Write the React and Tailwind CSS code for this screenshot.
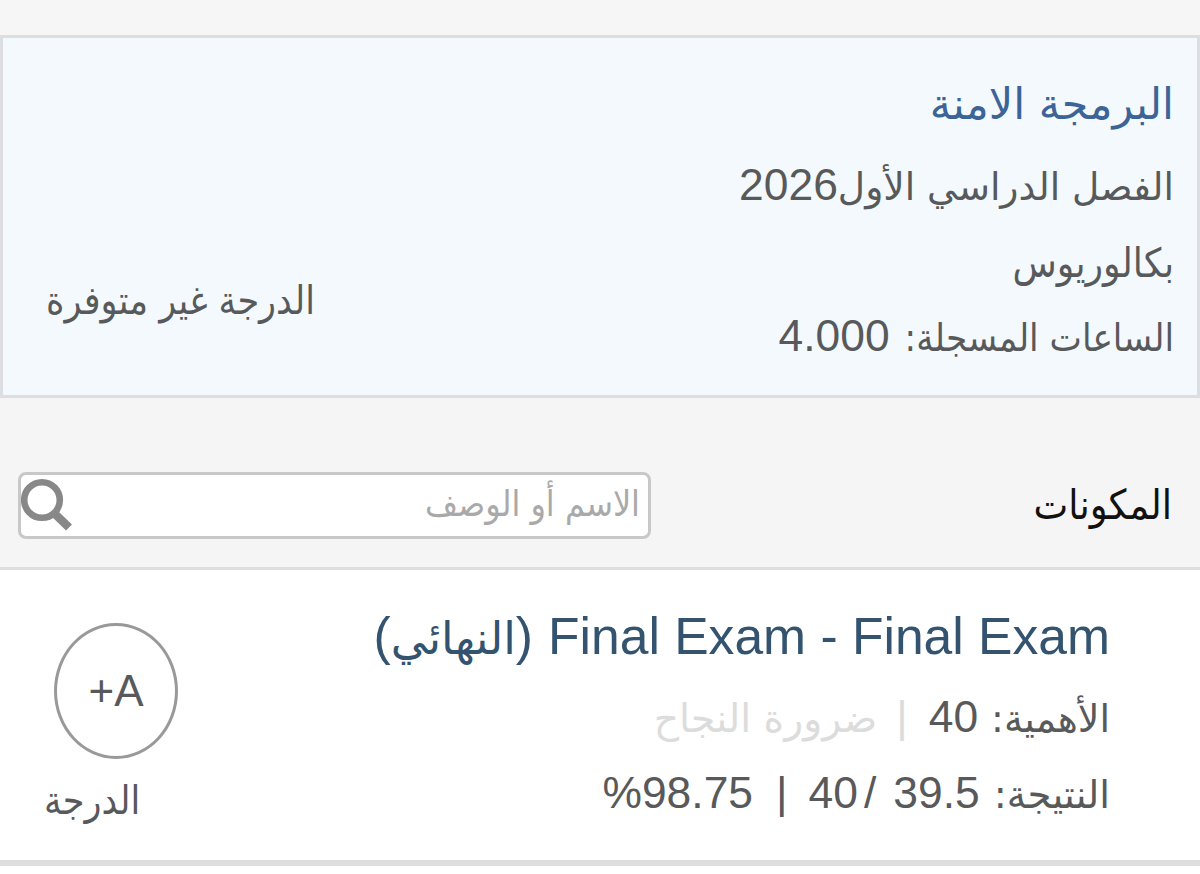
import React from 'react';

const Ar = ({ className = '', children }) => (
    <span className={`font-['DejaVu_Sans',sans-serif] whitespace-nowrap ${className}`}>
        {children}
    </span>
);

const ArNarrow = ({ className = '', children }) => (
    <span className={`font-['DejaVu_Sans_Condensed','DejaVu_Sans',sans-serif] font-stretch-condensed whitespace-nowrap ${className}`}>
        {children}
    </span>
);

const SearchIcon = () => (
    <svg className="w-[52px] h-[56px] shrink-0" viewBox="0 0 52 56" fill="none" stroke="#888888">
        <circle cx="21" cy="22" r="17.8" strokeWidth="6.6" />
        <path d="M33 35L48 49.5" strokeWidth="8.5" />
    </svg>
);

const CourseCard = () => (
    <section className="h-[363px] flex justify-between border-[3px] border-[#dcdee1] bg-[#f3f9fd] text-[#58595b]">
        <div className="pt-[34px] pr-[23px] text-[44.4px]">
            <h1 className="h-[78px] leading-[64px] text-[#3c6496]">
                <Ar className="text-[42.9px]">البرمجة الامنة</Ar>
            </h1>
            <p className="h-[77px] leading-[70px] flex items-baseline">
                <Ar className="text-[37.6px]">الفصل الدراسي الأول</Ar>
                <span>2026</span>
            </p>
            <p className="h-[74px] leading-[70px]">
                <ArNarrow className="text-[40.3px]">بكالوريوس</ArNarrow>
            </p>
            <p className="leading-[70px] flex items-baseline gap-[15px]">
                <ArNarrow className="text-[38.2px]">الساعات المسجلة:</ArNarrow>
                <span>4.000</span>
            </p>
        </div>
        <div className="pt-[228px] pl-[43px] leading-[70px]">
            <ArNarrow className="text-[39px]">الدرجة غير متوفرة</ArNarrow>
        </div>
    </section>
);

const ComponentsHeader = () => (
    <header className="h-[172px] flex justify-between items-start pt-[74px] pr-[28px] pl-[18px] border-b-[3px] border-[#dedede] bg-[#f5f5f5]">
        <h2 className="leading-[66px] text-[#111111]">
            <ArNarrow className="text-[41px]">المكونات</ArNarrow>
        </h2>
        <div className="w-[633px] h-[67px] flex items-center justify-between bg-white border-[3px] border-[#c8c8c8] rounded-lg pr-[8px]">
            <ArNarrow className="text-[35.5px] leading-[56px] pb-[3px] text-[#a9a9a9]">الاسم أو الوصف</ArNarrow>
            <SearchIcon />
        </div>
    </header>
);

const GradeItem = () => (
    <article className="h-[296px] flex justify-between bg-white border-b-[6px] border-[#dedede] text-[#58595b]">
        <div className="pt-[29px] pr-[90px] text-[44.4px]">
            <h3 className="h-[83px] leading-[74px] text-[51.6px] text-[#33536f] flex items-baseline gap-[15px]">
                <span dir="ltr">Final Exam - Final Exam</span>
                <span className="flex items-baseline">
                    <span>(</span>
                    <Ar className="text-[45.3px]">النهائي</Ar>
                    <span>)</span>
                </span>
            </h3>
            <p className="h-[76px] leading-[70px] flex items-baseline">
                <Ar className="text-[38px]">الأهمية:</Ar>
                <span className="mr-[13px]">40</span>
                <span className="mr-[21px] text-[#dcdcdc]">|</span>
                <Ar className="mr-[19px] text-[39.3px] text-[#dcdcdc]">ضرورة النجاح</Ar>
            </p>
            <p className="leading-[70px] flex items-baseline">
                <Ar className="text-[38.7px]">النتيجة:</Ar>
                <span className="mr-[14px]">39.5</span>
                <span className="mr-[17px] flex items-baseline gap-[6px]" dir="ltr">
                    <span>40</span>
                    <span>/</span>
                </span>
                <span className="mr-[21px]">|</span>
                <span className="mr-[23px]" dir="ltr">%98.75</span>
            </p>
        </div>
        <div className="pt-[53px] pl-[44px]">
            <div className="w-[124px] h-[136px] ml-[10px] flex items-center justify-center rounded-[50%] border-[3px] border-[#999999] text-[44px]">
                <span dir="ltr">+A</span>
            </div>
            <p className="mt-[10px] leading-[64px] text-left">
                <ArNarrow className="text-[39px]">الدرجة</ArNarrow>
            </p>
        </div>
    </article>
);

const App = () => (
    <main dir="rtl" className="w-[1200px] h-[874px] overflow-hidden bg-[#f6f6f6] pt-[35px] font-['Liberation_Sans',Arial,sans-serif]">
        <CourseCard />
        <ComponentsHeader />
        <GradeItem />
        <div className="h-2 bg-white" />
    </main>
);

export default App;
